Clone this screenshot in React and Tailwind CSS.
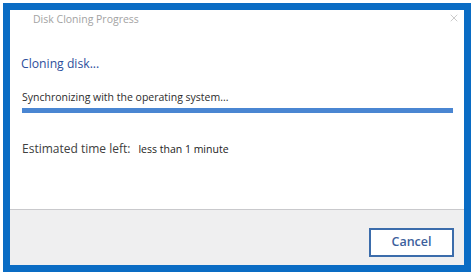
import { X } from 'lucide-react'

export default function App() {
  return (
    <div className="w-[474px] h-[279px] bg-white pt-[3px] pl-[3px]" style={{ fontFamily: '"Open Sans", "Noto Sans", sans-serif' }}>
      <div className="w-[468px] h-[269px] border-[7px] border-[#0a6cc4] flex flex-col bg-white">
        <div className="h-[199px] relative">
          <div className="pl-[23px] pt-[1px] text-[10.5px] leading-[16px] text-[#a3a3a3]">Disk Cloning Progress</div>
          <X className="absolute right-[4px] top-[2px] text-[#a8a8a8]" size={12} strokeWidth={1.2} />
          <div className="pl-[11px] mt-[28px] text-[12.2px] leading-[18px] text-[#2d4f9c]">Cloning disk...</div>
          <div className="pl-[12px] mt-[17px] text-[10.5px] leading-[14px] text-[#2c2c2c]">Synchronizing with the operating system...</div>
          <div className="ml-[12px] mt-[4px] w-[431px] h-[5px] bg-[#4a86d2]"></div>
          <div className="pl-[12px] mt-[27px] flex items-center">
            <span className="text-[12px] leading-[18px] text-[#404040]">Estimated time left:</span>
            <span className="ml-[8px] text-[10.5px] leading-[18px] text-[#222]">less than 1 minute</span>
          </div>
        </div>
        <div className="flex-1 bg-[#efeff0] border-t border-[#c9c9cc] flex justify-end items-start pt-[18px] pr-[10px]">
          <button className="w-[85px] h-[29px] border-2 border-[#3b6cab] bg-white text-[12.5px] font-semibold text-[#3c5f9c]">
            Cancel
          </button>
        </div>
      </div>
    </div>
  )
}
